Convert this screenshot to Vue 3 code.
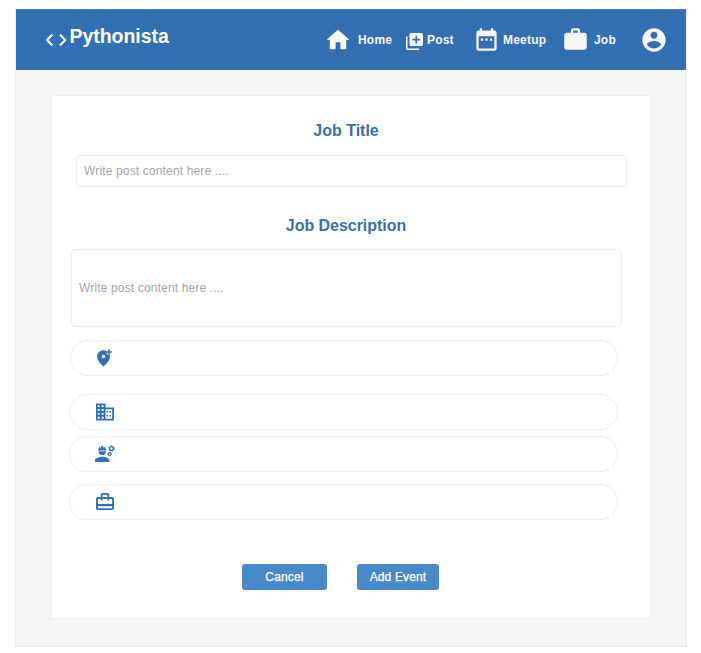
<script setup>
const rows = [
  { id: 'location' },
  { id: 'company' },
  { id: 'role' },
  { id: 'type' },
]
</script>

<template>
  <main class="frame">
    <header class="bar">
      <div class="brand">
        <svg class="code" viewBox="0 0 22 14" fill="none" stroke="#f6f6f8" stroke-width="2.200">
          <path d="M7.300 1.600 2.100 7l5.200 5.400M14.900 1.600 20.300 7l-5.400 5.400" />
        </svg>
        <span class="name">Pythonista</span>
      </div>
      <nav class="nav">
        <a class="item home">
          <svg viewBox="0 0 24 24"><path d="M10 19v-5h4v5c0 .55.45 1 1 1h3c.55 0 1-.45 1-1v-7h1.700c.46 0 .68-.57.33-.87L12.670 3.600c-.38-.34-.96-.34-1.340 0l-8.360 7.530c-.34.3-.13.87.33.87H5v7c0 .55.45 1 1 1h3c.55 0 1-.45 1-1z" /></svg>
          <span>Home</span>
        </a>
        <a class="item post">
          <svg viewBox="0 0 17 17"><path fill-rule="evenodd" d="M5 0h10.500Q17 0 17 1.500v10q0 1.500-1.500 1.500H5q-1.500 0-1.500-1.500v-10Q3.500 0 5 0zm4.400 2.700v3H6.400v1.700h3v3h1.700v-3h3V5.700h-3v-3z" /><path d="M0 3.500h1.500v12h11.500V17H1.500Q0 17 0 15.500z" /></svg>
          <span>Post</span>
        </a>
        <a class="item meetup">
          <svg viewBox="0 0 24 24"><path d="M9 11H7v2h2v-2zm4 0h-2v2h2v-2zm4 0h-2v2h2v-2zm2-7h-1V2h-2v2H8V2H6v2H5c-1.110 0-1.990.9-1.990 2L3 20a2 2 0 0 0 2 2h14c1.100 0 2-.9 2-2V6c0-1.100-.9-2-2-2zm0 16H5V9h14v11z" /></svg>
          <span>Meetup</span>
        </a>
        <a class="item job">
          <svg viewBox="0 0 24 24"><path d="M10 2h4a2 2 0 0 1 2 2v2h4a2 2 0 0 1 2 2v11a2 2 0 0 1-2 2H4c-1.110 0-2-.89-2-2V8c0-1.110.89-2 2-2h4V4c0-1.110.89-2 2-2m4 4V4h-4v2h4z" /></svg>
          <span>Job</span>
        </a>
        <a class="item account">
          <svg viewBox="0 0 24 24"><path d="M12 2C6.480 2 2 6.480 2 12s4.480 10 10 10 10-4.480 10-10S17.520 2 12 2zm0 3c1.660 0 3 1.340 3 3s-1.340 3-3 3-3-1.340-3-3 1.340-3 3-3zm0 14.200c-2.500 0-4.710-1.280-6-3.220.03-1.990 4-3.080 6-3.080 1.990 0 5.970 1.090 6 3.080-1.290 1.940-3.500 3.220-6 3.220z" /></svg>
        </a>
      </nav>
    </header>

    <section class="card">
      <h2 class="title">Job Title</h2>
      <div class="field short"><span>Write post content here ....</span></div>
      <h2 class="title second">Job Description</h2>
      <div class="field long"><span>Write post content here ....</span></div>

      <div v-for="row in rows" :key="row.id" class="pill" :class="row.id">
        <svg v-if="row.id === 'location'" viewBox="0 0 20 20">
          <path fill-rule="evenodd" d="M8.500 2.200A6.500 6.200 0 0 0 2 8.500c0 3.400 2.600 6.500 6.500 10 3.900-3.500 6.500-6.600 6.500-10A6.500 6.200 0 0 0 8.500 2.200zM8.500 6.700a1.800 1.800 0 1 1 0 3.600 1.800 1.800 0 0 1 0-3.600z" />
          <path d="M14 1.500v5.600M11.200 4h5.600" stroke="#fff" stroke-width="2.800" />
          <path d="M14 1.200v5.600M11.200 4h5.600" stroke="#3270b2" stroke-width="1.600" />
        </svg>
        <svg v-else-if="row.id === 'company'" viewBox="0 0 20 20">
          <path fill-rule="evenodd" d="M1 1.500h9.500v4H19v13H1zM2.800 3.200v1.900h1.800V3.200zm3.900 0v1.900h1.900V3.200zM2.800 7v1.900h1.800V7zm3.900 0v1.900h1.900V7zM2.800 10.900v1.900h1.800v-1.900zm3.900 0v1.900h1.900v-1.900zM2.800 14.800v1.900h1.800v-1.900zm3.900 0v1.900h1.900v-1.900zM10.500 7.300v9.500h6.700V7.300z" />
          <path d="M11.500 9h1.600v1.600h-1.600zm2.900 0h1.600v1.600h-1.600zm-2.900 4h1.600v1.600h-1.600zm2.900 0h1.600v1.600h-1.600z" />
        </svg>
        <svg v-else-if="row.id === 'role'" viewBox="0 0 20 20">
          <path d="M0 18v-1.700c0-2.300 4.700-3.500 7.200-3.500s7.100 1.200 7.100 3.500V18zM3.500 7.200a3.700 3.700 0 0 0 7.400 0zM3 6.400v-.8h.5c0-1.300.7-2.400 1.700-3v1.600h.7V2.300h2.600v1.900h.7V2.600c1 .6 1.700 1.700 1.700 3h.5v.8z" />
          <g fill="none" stroke="#3270b2">
            <circle cx="16.500" cy="4.500" r="1.900" stroke-width="1.400" />
            <circle cx="16.500" cy="4.500" r="2.800" stroke-width=".9" stroke-dasharray="1.500 1.430" />
            <circle cx="14.600" cy="10" r="1.400" stroke-width="1.200" />
            <circle cx="14.600" cy="10" r="2" stroke-width=".6" stroke-dasharray="1 1.090" />
          </g>
        </svg>
        <svg v-else viewBox="0 0 20 20">
          <path fill-rule="evenodd" d="M5.800 5V2.700Q5.800 1 7.500 1h5q1.700 0 1.700 1.700V5h3.100Q19 5 19 6.700v9.600q0 1.700-1.700 1.700H2.700Q1 18 1 16.300V6.700Q1 5 2.700 5zm1.800 0h4.800V2.700H7.600zM2.900 6.900v5.200h14.200V6.900h-2.900v1.600h-1.800V6.900H7.600v1.600H5.800V6.900zm0 7.300v2h14.200v-2z" />
        </svg>
      </div>

      <div class="actions">
        <button class="btn cancel">Cancel</button>
        <button class="btn add">Add Event</button>
      </div>
    </section>
  </main>
</template>

<style>
body {
  background: #fff;
}
</style>

<style scoped>
* {
  box-sizing: border-box;
}
.frame {
  width: 672px;
  height: 638px;
  margin: 9px 0 0 15px;
  border: 1px solid #ececee;
  border-top: 0;
  background: #f6f4f5;
  font-family: "Liberation Sans", Arial, sans-serif;
  overflow: hidden;
}
.bar {
  display: flex;
  align-items: flex-start;
  height: 61px;
  background: #3270b2;
  border-top: 1px solid #4d7fb5;
  color: #f6f6fa;
}
.brand {
  display: flex;
  padding: 14px 0 0 29px;
}
.code {
  width: 22px;
  height: 14px;
  margin-top: 9px;
}
.name {
  margin-left: 2.5px;
  font-size: 19.5px;
  line-height: 24px;
  font-weight: 700;
  letter-spacing: -0.05px;
  color: #fff;
}
.nav {
  display: flex;
  align-items: center;
  height: 60px;
  margin-left: auto;
  padding-right: 18px;
}
.item {
  display: flex;
  align-items: center;
  height: 28px;
  font-size: 12px;
  line-height: 16px;
  font-weight: 700;
  letter-spacing: 0.2px;
}
.item svg {
  display: block;
  flex: none;
  width: 27px;
  height: 27px;
  fill: #f6f6f8;
}
.home { width: 81px; }
.home svg { width: 28px; height: 28px; margin: 0 6px 0 -1px; }
.post { width: 67px; }
.post svg { width: 17px; height: 17px; margin: 2px 4px 0 0; }
.meetup { width: 89px; }
.meetup svg { margin: -1px 3px 0 0; }
.job { width: 78px; }
.job svg { margin: -1px 5px 0 0; }
.account svg { width: 28px; height: 28px; }
.card {
  width: 600px;
  height: 524px;
  margin: 25px 0 0 35px;
  border: 1px solid #eeedee;
  background: #fff;
}
.title {
  width: 588px;
  margin: 25px 0 0;
  font-size: 16px;
  line-height: 20px;
  font-weight: 700;
  text-align: center;
  color: #3b6fac;
}
.field {
  display: flex;
  align-items: center;
  width: 551px;
  border: 1px solid #ececec;
  border-radius: 4px;
  padding-left: 7px;
  font-size: 12px;
  line-height: 16px;
  letter-spacing: 0.15px;
  color: #a5a5a5;
}
.short {
  height: 32px;
  margin: 14px 0 0 24px;
}
.title.second {
  margin-top: 29px;
  letter-spacing: -0.03px;
}
.long {
  height: 78px;
  margin: 13px 0 0 19px;
  padding-bottom: 1px;
}
.pill {
  display: flex;
  align-items: center;
  width: 549px;
  height: 36px;
  margin-left: 17px;
  padding-left: 25px;
  border: 1px solid #eeeeee;
  border-radius: 18px;
}
.pill svg {
  width: 20px;
  height: 20px;
  fill: #3270b2;
}
.location {
  width: 548px;
  margin: 13px 0 0 18px;
  padding-left: 24px;
}
.company { margin-top: 18px; }
.role { margin-top: 6px; }
.type { margin-top: 12px; }
.actions {
  display: flex;
  gap: 30px;
  margin: 44px 0 0 190px;
}
.btn {
  height: 26px;
  padding: 0;
  border: 0;
  border-radius: 3px;
  background: #4b8aca;
  font: 12px/26px "Liberation Sans", Arial, sans-serif;
  letter-spacing: 0.15px;
  color: #fff;
  -webkit-text-stroke: 0.25px #fff;
}
.cancel { width: 85px; }
.add { width: 82px; }
</style>
